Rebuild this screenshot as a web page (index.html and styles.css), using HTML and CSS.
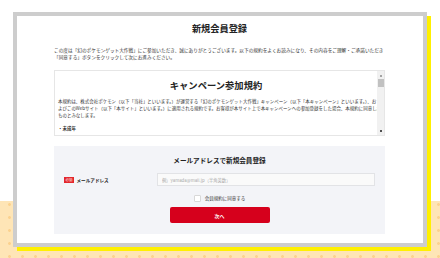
FILE: index.html
```html
<!DOCTYPE html>
<html lang="ja">

<head>
    <meta charset="UTF-8">
    <meta name="viewport" content="width=device-width, initial-scale=1.0">
    <title>新規会員登録</title>
    <link rel="stylesheet" href="styles.css">
</head>

<body>
    <div class="page">
        <div class="card">
            <h1>新規会員登録</h1>
            <p class="intro">この度は「幻のポケモンゲット大作戦」にご参加いただき、誠にありがとうございます。以下の規約をよくお読みになり、その内容をご理解・ご承諾いただき<br>「同意する」ボタンをクリックして次にお進みください。</p>

            <div class="terms">
                <div class="terms-body">
                    <h2>キャンペーン参加規約</h2>
                    <p>本規約は、株式会社ポケモン（以下「当社」といいます。）が運営する「幻のポケモンゲット大作戦」キャンペーン（以下「本キャンペーン」といいます。）、お<br>よびこのWebサイト（以下「本サイト」といいます。）に適用される規約です。お客様が本サイト上で本キャンペーンへの参加登録をした場合、本規約に同意した<br>ものとみなします。</p>
                    <h3>・未成年</h3>
                </div>
                <div class="scrollbar">
                    <span class="arrow up"></span>
                    <span class="thumb"></span>
                    <span class="track"></span>
                    <span class="arrow down"></span>
                </div>
            </div>

            <form class="signup">
                <h2>メールアドレスで新規会員登録</h2>
                <div class="field">
                    <label for="email"><span class="badge">必須</span>メールアドレス</label>
                    <input type="text" id="email" placeholder="例）yamada@mail.jp（半角英数）">
                </div>
                <label class="agree"><input type="checkbox"><span>会員規約に同意する</span></label>
                <button type="button">次へ</button>
            </form>
        </div>
    </div>
</body>

</html>
```

FILE: styles.css
```css
* {
    box-sizing: border-box;
}

body {
    margin: 0;
    font-family: "Noto Sans CJK JP", "Noto Sans", sans-serif;
    color: #333;
}

.page {
    width: 440px;
    height: 258px;
    overflow: hidden;
    padding: 12px 13px 0;
    background:
        linear-gradient(#fff 0 201px, transparent 201px),
        radial-gradient(circle, #fbd28f 1.1px, transparent 1.7px) 3px 3px / 13px 13px,
        #fee5b6;
}

.card {
    height: 235px;
    border: 4px solid #cdcdcd;
    background: #fff;
    box-shadow: 4px 4px 0 #fff000;
    padding: 6px 38px 0 37px;
}

h1 {
    margin: 0;
    text-align: center;
    font-size: 9.2px;
    line-height: 12px;
    font-weight: 700;
    color: #222;
}

.intro {
    margin: 13px 0 0;
    font-size: 4.68px;
    line-height: 6.5px;
    white-space: nowrap;
}

/* 規約ボックス */
.terms {
    margin-top: 10px;
    height: 66px;
    display: flex;
    border: 1px solid #e6e6e6;
}

.terms-body {
    flex: 1;
    min-width: 0;
    padding: 7px 3px 0;
    font-size: 4.48px;
    line-height: 7px;
}

.terms h2 {
    margin: 0;
    text-align: center;
    font-size: 9.3px;
    line-height: 14px;
    color: #222;
}

.terms p {
    margin: 6px 0 0;
    white-space: nowrap;
}

.terms h3 {
    margin: 6px 0 0;
    font-size: 4.48px;
    font-weight: 700;
}

.scrollbar {
    flex: none;
    width: 7px;
    display: flex;
    flex-direction: column;
    background: #f1f1f1;
}

.arrow {
    height: 8px;
    background-repeat: no-repeat;
    background-position: center;
    background-size: 4px 3px;
}

.arrow.up {
    background-image: conic-gradient(from 150deg at 50% 0, #a3a3a3 60deg, transparent 0);
}

.arrow.down {
    background-image: conic-gradient(from -30deg at 50% 100%, #505050 60deg, transparent 0);
}

.thumb {
    height: 8px;
    margin: 0 0.5px;
    background: #c1c1c1;
}

.track {
    flex: 1;
}

/* 登録フォーム */
.signup {
    margin-top: 10px;
    height: 88px;
    background: #f3f4f8;
    padding: 10px 10px 11px;
    display: flex;
    flex-direction: column;
}

.signup h2 {
    margin: 0;
    text-align: center;
    font-size: 6.6px;
    line-height: 9px;
    color: #222;
}

.field {
    margin-top: 8px;
    display: flex;
    align-items: center;
}

.field label {
    width: 93px;
    display: flex;
    align-items: center;
    font-size: 4.6px;
    line-height: 6px;
    font-weight: 700;
    color: #222;
}

.badge {
    width: 10px;
    height: 6px;
    margin-right: 2.5px;
    background: #e3262c;
    color: #fff;
    font-size: 3.4px;
    line-height: 6px;
    text-align: center;
    font-weight: 400;
}

.field input {
    flex: 1;
    height: 13px;
    border: 1px solid #e2e3e6;
    background: #fafafa;
    padding: 0 4px;
    font-family: inherit;
    font-size: 4.3px;
    outline: none;
}

.field input::placeholder {
    color: #a8a8a8;
}

.agree {
    margin-top: 8px;
    height: 8px;
    display: flex;
    align-items: center;
    justify-content: center;
    gap: 4px;
    font-size: 4.5px;
    line-height: 6px;
    color: #333;
}

.agree input {
    appearance: none;
    margin: 0;
    width: 7px;
    height: 7px;
    border: 1px solid #d8d8d8;
    border-radius: 1px;
    background: #fff;
}

.signup button {
    margin: 5px auto 0;
    width: 100px;
    height: 16px;
    border: none;
    border-radius: 2px;
    background: #d6001c;
    color: #fff;
    font-family: inherit;
    font-size: 5px;
    font-weight: 700;
}
```
